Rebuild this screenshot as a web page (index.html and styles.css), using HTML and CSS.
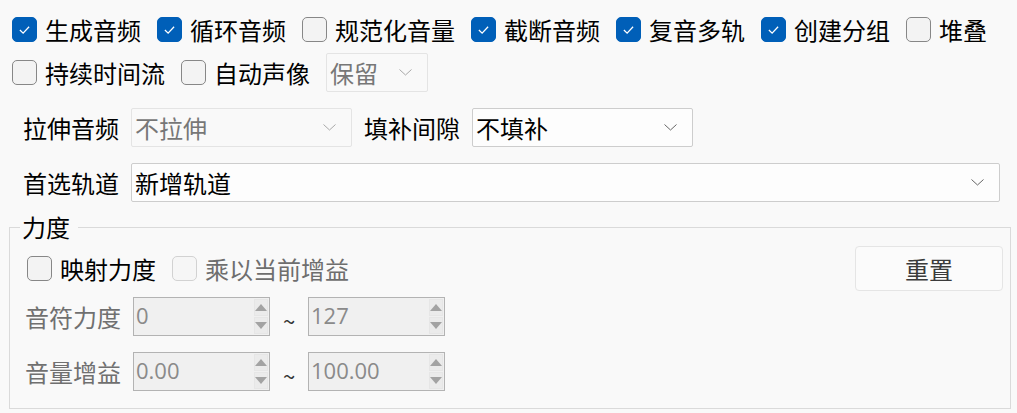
FILE: index.html
```html
<!DOCTYPE html>
<html>
<head>
    <meta charset='utf-8'>
    <title>导入选项</title>
    <meta name='viewport' content='width=device-width, initial-scale=1'>
    <link rel="stylesheet" href="styles.css">
</head>
<body>
    <div class="panel">
        <div class="opts">
            <label class="check on"><span class="box"><svg viewBox="0 0 25 25"><polyline points="7.5,13 11,16.5 17.5,9.5"/></svg></span>生成音频</label>
            <label class="check on"><span class="box"><svg viewBox="0 0 25 25"><polyline points="7.5,13 11,16.5 17.5,9.5"/></svg></span>循环音频</label>
            <label class="check"><span class="box"></span>规范化音量</label>
            <label class="check on"><span class="box"><svg viewBox="0 0 25 25"><polyline points="7.5,13 11,16.5 17.5,9.5"/></svg></span>截断音频</label>
            <label class="check on"><span class="box"><svg viewBox="0 0 25 25"><polyline points="7.5,13 11,16.5 17.5,9.5"/></svg></span>复音多轨</label>
            <label class="check on"><span class="box"><svg viewBox="0 0 25 25"><polyline points="7.5,13 11,16.5 17.5,9.5"/></svg></span>创建分组</label>
            <label class="check"><span class="box"></span>堆叠</label>
        </div>
        <div class="opts second">
            <label class="check"><span class="box"></span>持续时间流</label>
            <label class="check"><span class="box"></span>自动声像</label>
            <div class="select off short">
                <span>保留</span>
                <svg class="chev" viewBox="0 0 13 7"><polyline points="0.5,0.5 6.5,6 12.5,0.5"/></svg>
            </div>
        </div>
        <div class="form">
            <div class="form-row">
                <span class="label">拉伸音频</span>
                <div class="select off mid">
                    <span>不拉伸</span>
                    <svg class="chev" viewBox="0 0 13 7"><polyline points="0.5,0.5 6.5,6 12.5,0.5"/></svg>
                </div>
                <span class="label after">填补间隙</span>
                <div class="select mid">
                    <span>不填补</span>
                    <svg class="chev" viewBox="0 0 13 7"><polyline points="0.5,0.5 6.5,6 12.5,0.5"/></svg>
                </div>
            </div>
            <div class="form-row">
                <span class="label">首选轨道</span>
                <div class="select wide">
                    <span>新增轨道</span>
                    <svg class="chev" viewBox="0 0 13 7"><polyline points="0.5,0.5 6.5,6 12.5,0.5"/></svg>
                </div>
            </div>
        </div>
        <fieldset class="group">
            <legend>力度</legend>
            <div class="group-top">
                <label class="check"><span class="box"></span>映射力度</label>
                <label class="check off"><span class="box"></span>乘以当前增益</label>
                <button class="btn">重置</button>
            </div>
            <div class="range-row">
                <span class="label">音符力度</span>
                <div class="spin">
                    <span class="val">0</span>
                    <div class="arrows">
                        <span class="up"></span>
                        <span class="down"></span>
                    </div>
                </div>
                <span class="tilde">~</span>
                <div class="spin">
                    <span class="val">127</span>
                    <div class="arrows">
                        <span class="up"></span>
                        <span class="down"></span>
                    </div>
                </div>
            </div>
            <div class="range-row last">
                <span class="label">音量增益</span>
                <div class="spin">
                    <span class="val">0.00</span>
                    <div class="arrows">
                        <span class="up"></span>
                        <span class="down"></span>
                    </div>
                </div>
                <span class="tilde">~</span>
                <div class="spin">
                    <span class="val">100.00</span>
                    <div class="arrows">
                        <span class="up"></span>
                        <span class="down"></span>
                    </div>
                </div>
            </div>
        </fieldset>
    </div>
</body>
</html>
```

FILE: styles.css
```css
* {
    box-sizing: border-box;
    font-family: "Noto Sans CJK SC", "Noto Sans", sans-serif;
}
body {
    margin: 0;
    background-color: #f9f9f9;
    color: #000;
    font-size: 24px;
}
.panel {
    padding: 10px 6px 0 9px;
}

/* checkbox rows */
.opts {
    display: flex;
    align-items: center;
    height: 39px;
    padding-left: 3px;
}
.opts.second {
    margin-top: 4px;
}
.check {
    display: flex;
    align-items: center;
    gap: 8px;
    margin-right: 16px;
    line-height: 30px;
    white-space: nowrap;
}
.box {
    width: 25px;
    height: 25px;
    border: 1px solid #878787;
    border-radius: 5px;
    background: #f3f3f3;
    flex: none;
}
.check.on .box {
    border-color: #005fb8;
    background: #005fb8;
}
.box svg {
    display: block;
    width: 23px;
    height: 23px;
}
.box polyline {
    fill: none;
    stroke: #fff;
    stroke-width: 1.4;
}
.check.off {
    color: #6e6e6e;
}
.check.off .box {
    border-color: #d2d2d2;
    background: #f6f6f6;
}

/* combo boxes */
.select {
    display: flex;
    align-items: center;
    justify-content: space-between;
    height: 39px;
    padding: 0 15px 0 3px;
    border: 1px solid #cdcdcd;
    border-radius: 2px;
    background: #fdfdfd;
    line-height: 30px;
}
.select.off {
    border-color: #e4e4e4;
    background: #f9f9f9;
    color: #777;
}
.select.short {
    width: 102px;
}
.select.mid {
    width: 221px;
}
.select.wide {
    flex: 1;
}
.chev {
    width: 13px;
    height: 7px;
}
.chev polyline {
    fill: none;
    stroke: #666;
    stroke-width: 1;
}
.select.off .chev polyline {
    stroke: #a8a8a8;
}

.form {
    margin-top: 16px;
    padding: 0 11px 0 14px;
}
.form-row {
    display: flex;
    align-items: center;
    height: 39px;
}
.form-row + .form-row {
    margin-top: 16px;
}
.label {
    width: 96px;
    margin-right: 12px;
    line-height: 30px;
    white-space: nowrap;
}
.label.after {
    margin-left: 12px;
}

/* velocity group */
.group {
    margin: 13px 0 0 0;
    padding: 0 7px 17px 10px;
    border: 1px solid #dadada;
    min-width: 0;
}
.group legend {
    padding: 0 8px 0 2px;
    line-height: 24px;
    height: 24px;
}
.group-top {
    display: flex;
    align-items: center;
    height: 45px;
    margin: 7px 0 0 7px;
}
.btn {
    margin-left: auto;
    width: 148px;
    height: 45px;
    border: 1px solid #e5e5e5;
    border-radius: 4px;
    background: #fbfbfb;
    color: #3b3b3b;
    font-size: 24px;
    line-height: 30px;
    padding: 0;
}
.range-row {
    display: flex;
    align-items: center;
    height: 39px;
    margin: 6px 0 0 5px;
    color: #707070;
}
.range-row.last {
    margin-top: 16px;
}
.spin {
    display: flex;
    width: 137px;
    height: 39px;
    border: 1px solid #b3b3b3;
    background: #f0f0f0;
}
.val {
    flex: 1;
    padding-left: 2px;
    line-height: 34px;
    font-family: "Open Sans", "Noto Sans", sans-serif;
    font-size: 22px;
    color: #8a8a8a;
}
.arrows {
    display: flex;
    flex-direction: column;
    gap: 1px;
    width: 15px;
    padding: 1px 1px 1px 0;
}
.arrows span {
    flex: 1;
    display: flex;
    align-items: center;
    justify-content: center;
    border: 1px solid #e6e6e6;
    background: #ebebeb;
}
.arrows span::before {
    content: "";
    border-left: 6px solid transparent;
    border-right: 6px solid transparent;
}
.arrows .up::before {
    border-bottom: 7px solid #a3a3a3;
}
.arrows .down::before {
    border-top: 7px solid #a3a3a3;
}
.tilde {
    width: 38px;
    text-align: center;
    font-size: 22px;
    color: #333;
    padding-top: 6px;
}
```
